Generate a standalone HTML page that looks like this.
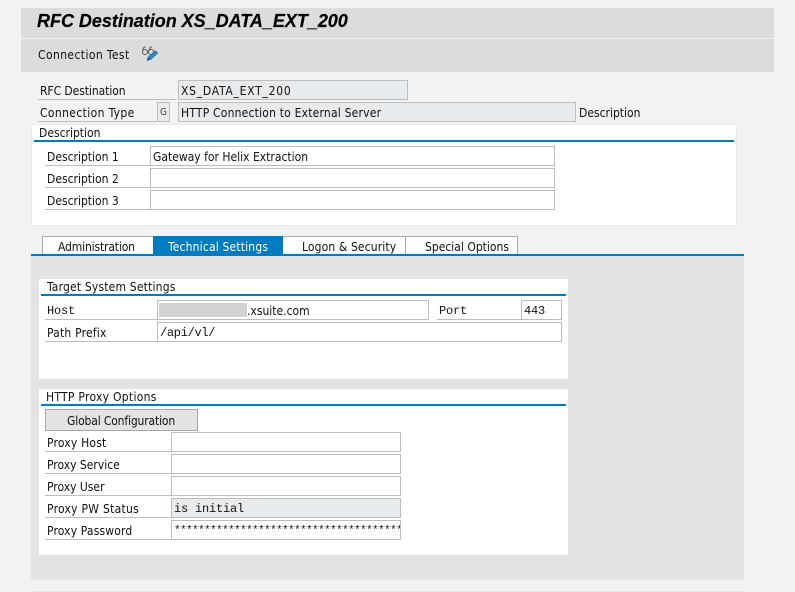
<!DOCTYPE html>
<html><head><meta charset="utf-8"><title>RFC Destination</title>
<style>
html,body{margin:0;padding:0;width:795px;height:592px;overflow:hidden;background:#f2f2f2}
body{position:relative;font-family:"DejaVu Sans Condensed","DejaVu Sans","Liberation Sans",sans-serif;font-stretch:condensed;font-size:12px;color:#111}
div{position:absolute;box-sizing:border-box}
.t{white-space:nowrap;height:20px;line-height:20px;margin-top:1px}
.m{font-family:"Liberation Mono",monospace;font-stretch:normal;letter-spacing:-.2px}
.f{background:#fff;height:20px;border:1px solid #bdbdbd}
.ro{background:#e8ebee}
.u{height:1px;background:#bdbdbd;margin-top:1px}
.b{height:2px;background:#007cc0}
.w{background:#fff}
</style></head><body>
<div style="left:21px;top:8px;width:753px;height:30px;background:#dcdcdc"></div>
<div style="left:21px;top:39px;width:753px;height:33px;background:#dcdcdc"></div>
<div class="t" style="left:37px;top:10px;font:italic bold 18px/20px 'Liberation Sans',sans-serif;color:#000;letter-spacing:-.02px;-webkit-text-stroke:.2px #000">RFC Destination XS_DATA_EXT_200</div>
<div class="t" style="left:38px;top:44px;letter-spacing:.4px">Connection Test</div>
<svg style="position:absolute;left:140px;top:44px" width="20" height="20" viewBox="0 0 20 20">
<g fill="none" stroke="#555" stroke-width="1"><path d="M3 6.500C3 4 4 3 5.500 2.800M9.500 6.500C9.500 4 10.500 3 12 2.800"/><circle cx="5" cy="8" r="2.500"/><circle cx="11" cy="8" r="2.500"/><path d="M7.500 7.500h1"/></g>
<path d="M7 16.500 8 13 15.500 6.500 18 9 11 15.500Z" fill="#2a86c4" stroke="#1f6ea8" stroke-width=".5"/><path d="M7 16.500 8 13.500 10 15.500Z" fill="#134f7c"/></svg>

<div class="t" style="left:40px;top:80px;letter-spacing:-.07px">RFC Destination</div>
<div class="u" style="left:38px;top:98px;width:138px"></div>
<div class="f ro" style="left:178px;top:80px;width:230px"></div>
<div class="t" style="left:181px;top:80px;letter-spacing:.75px">XS_DATA_EXT_200</div>
<div class="t" style="left:40px;top:102px;letter-spacing:.37px">Connection Type</div>
<div class="u" style="left:38px;top:120px;width:118px"></div>
<div class="f ro" style="left:157px;top:102px;width:13px"></div>
<div class="t" style="left:160px;top:102px;font-size:10px;color:#444">G</div>
<div class="f ro" style="left:178px;top:102px;width:398px"></div>
<div class="t" style="left:181px;top:102px;letter-spacing:.2px">HTTP Connection to External Server</div>
<div class="t" style="left:579px;top:102px">Description</div>

<div class="w" style="left:31px;top:124px;width:706px;height:102px;border:1px solid #e8e8e8"></div>
<div class="t" style="left:39px;top:122px">Description</div>
<div class="b" style="left:34px;top:140px;width:700px"></div>
<div class="t" style="left:47px;top:146px">Description 1</div>
<div class="u" style="left:45px;top:164px;width:106px"></div>
<div class="f" style="left:150px;top:146px;width:405px"></div>
<div class="t" style="left:153px;top:146px">Gateway for Helix Extraction</div>
<div class="t" style="left:47px;top:168px">Description 2</div>
<div class="u" style="left:45px;top:186px;width:106px"></div>
<div class="f" style="left:150px;top:168px;width:405px"></div>
<div class="t" style="left:47px;top:190px">Description 3</div>
<div class="u" style="left:45px;top:208px;width:106px"></div>
<div class="f" style="left:150px;top:190px;width:405px"></div>

<div class="w" style="left:42px;top:236px;width:476px;height:19px;border:1px solid #a8a8a8;border-width:1px 1px 0 1px"></div>
<div style="left:405px;top:236px;width:1px;height:19px;background:#a8a8a8"></div>
<div style="left:153px;top:236px;width:130px;height:19px;background:#007cc0"></div>
<div class="t" style="left:58px;top:236px;letter-spacing:-.15px">Administration</div>
<div class="t" style="left:168px;top:236px;color:#fff;letter-spacing:.17px">Technical Settings</div>
<div class="t" style="left:302px;top:236px;letter-spacing:.12px">Logon &amp; Security</div>
<div class="t" style="left:425px;top:236px">Special Options</div>
<div class="b" style="left:31px;top:254px;width:713px"></div>
<div style="left:31px;top:256px;width:713px;height:324px;background:#e3e3e3"></div>
<div style="left:31px;top:591px;width:713px;height:1px;background:#e3e3e3"></div>

<div class="w" style="left:39px;top:279px;width:529px;height:100px"></div>
<div class="t" style="left:47px;top:276px;letter-spacing:.18px">Target System Settings</div>
<div class="b" style="left:41px;top:294px;width:525px"></div>
<div class="t m" style="left:47px;top:300px">Host</div>
<div class="u" style="left:45px;top:318px;width:113px"></div>
<div class="f" style="left:157px;top:300px;width:272px"></div>
<div style="left:159px;top:303px;width:88px;height:14px;background:#d3d3d3"></div>
<div class="t" style="left:247px;top:300px">.xsuite.com</div>
<div class="t m" style="left:439px;top:300px">Port</div>
<div class="u" style="left:437px;top:318px;width:85px"></div>
<div class="f" style="left:521px;top:300px;width:41px"></div>
<div class="t m" style="left:524px;top:300px">443</div>
<div class="t" style="left:47px;top:322px;letter-spacing:.2px">Path Prefix</div>
<div class="u" style="left:45px;top:340px;width:113px"></div>
<div class="f" style="left:157px;top:322px;width:405px"></div>
<div class="t m" style="left:160px;top:322px;letter-spacing:-.3px">/api/vl/</div>

<div class="w" style="left:39px;top:389px;width:529px;height:166px"></div>
<div class="t" style="left:46px;top:386px;letter-spacing:.28px">HTTP Proxy Options</div>
<div class="b" style="left:41px;top:404px;width:525px"></div>
<div style="left:45px;top:409px;width:153px;height:22px;background:#e3e3e3;border:1px solid #a8a8a8"></div>
<div class="t" style="left:67px;top:410px;letter-spacing:-.15px">Global Configuration</div>

<div class="t" style="left:47px;top:432px;letter-spacing:.2px">Proxy Host</div>
<div class="u" style="left:45px;top:450px;width:127px"></div>
<div class="f" style="left:171px;top:432px;width:230px"></div>
<div class="t" style="left:47px;top:454px">Proxy Service</div>
<div class="u" style="left:45px;top:472px;width:127px"></div>
<div class="f" style="left:171px;top:454px;width:230px"></div>
<div class="t" style="left:47px;top:476px">Proxy User</div>
<div class="u" style="left:45px;top:494px;width:127px"></div>
<div class="f" style="left:171px;top:476px;width:230px"></div>
<div class="t" style="left:47px;top:498px;letter-spacing:.27px">Proxy PW Status</div>
<div class="u" style="left:45px;top:516px;width:127px"></div>
<div class="f ro" style="left:171px;top:498px;width:230px"></div>
<div class="t m" style="left:174px;top:498px">is initial</div>
<div class="t" style="left:47px;top:520px;letter-spacing:.15px">Proxy Password</div>
<div class="u" style="left:45px;top:538px;width:127px"></div>
<div class="f" style="left:171px;top:520px;width:230px"></div>
<div class="t m" style="left:174px;top:520px;width:226px;overflow:hidden;font-size:11px;letter-spacing:-.6px">*********************************************</div>
</body></html>
